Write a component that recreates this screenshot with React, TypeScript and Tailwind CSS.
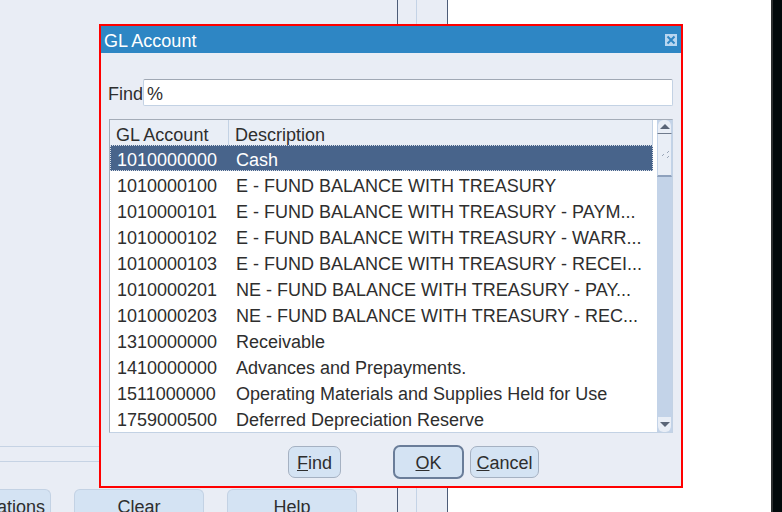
import React from 'react';

const ROWS: [string, string][] = [
  ['1010000000', 'Cash'],
  ['1010000100', 'E - FUND BALANCE WITH TREASURY'],
  ['1010000101', 'E - FUND BALANCE WITH TREASURY - PAYM...'],
  ['1010000102', 'E - FUND BALANCE WITH TREASURY - WARR...'],
  ['1010000103', 'E - FUND BALANCE WITH TREASURY - RECEI...'],
  ['1010000201', 'NE - FUND BALANCE WITH TREASURY - PAY...'],
  ['1010000203', 'NE - FUND BALANCE WITH TREASURY - REC...'],
  ['1310000000', 'Receivable'],
  ['1410000000', 'Advances and Prepayments.'],
  ['1511000000', 'Operating Materials and Supplies Held for Use'],
  ['1759000500', 'Deferred Depreciation Reserve'],
];

// Oracle Forms look: pale blue-grey panels, blue title bar
function TabButton({ children, className = '' }: { children: React.ReactNode; className?: string }) {
  return (
    <div
      className={`shrink-0 h-[30px] rounded-t-[6px] border border-b-0 border-[#c3d2e4] bg-[#d4e3f3] text-[18px] leading-none text-[#2e2e2e] flex justify-center pt-[8px] ${className}`}
    >
      {children}
    </div>
  );
}

function DlgButton({ children, def = false, w }: { children: React.ReactNode; def?: boolean; w: string }) {
  return (
    <div
      className={`${w} flex items-center justify-center rounded-[7px] bg-[#d4e3f3] text-[18px] leading-none text-[#2e2e2e] pt-[2px] ${
        def ? 'h-[34px] border-2 border-[#6a7d99]' : 'h-[32px] border border-[#a5b1c2]'
      }`}
    >
      {children}
    </div>
  );
}

function Scrollbar() {
  return (
    <div className="w-[15px] bg-[#c3d3e8] flex flex-col">
      <div className="h-[14px] bg-[#e9eef6] rounded-t-[6px] border-x border-[#c3d3e8] flex items-center justify-center border-b border-b-[#6f7a8c]">
        <div className="w-0 h-0 border-x-[5px] border-x-transparent border-b-[5px] border-b-[#5a6577]" />
      </div>
      <div className="h-[43px] bg-[#e9eef6] border-x border-[#c3d3e8] border-b-2 border-b-[#8ea1bd] relative">
        <svg width="13" height="13" viewBox="0 0 13 13" className="absolute left-[1px] top-[14px]">
          <rect x="9" y="3" width="1" height="1" fill="#9aa6b8" />
          <rect x="8" y="4" width="1" height="1" fill="#9aa6b8" />
          <rect x="4" y="6" width="1" height="1" fill="#9aa6b8" />
          <rect x="3" y="7" width="1" height="1" fill="#9aa6b8" />
          <rect x="9" y="8" width="1" height="1" fill="#9aa6b8" />
          <rect x="8" y="9" width="1" height="1" fill="#9aa6b8" />
        </svg>
      </div>
      <div className="flex-1" />
      <div className="h-[15px] bg-[#e9eef6] rounded-b-[6px] border-x border-[#c3d3e8] flex items-center justify-center">
        <div className="w-0 h-0 border-x-[5px] border-x-transparent border-t-[5px] border-t-[#5a6577]" />
      </div>
    </div>
  );
}

export default function App() {
  return (
    <div className="relative w-[782px] h-[512px] overflow-hidden flex font-['Liberation_Sans',Arial,sans-serif]">
      {/* background form */}
      <div className="w-[397px] bg-[#e9edf5] flex flex-col overflow-hidden">
        <div className="h-[446px] shrink-0" />
        <div className="h-[16px] shrink-0 border-y border-[#c6d3e4]" />
        <div className="h-[27px] shrink-0" />
        <div className="flex gap-[23px]">
          <TabButton className="w-[51px] border-l-0 rounded-tl-none justify-end pr-[5px] overflow-hidden whitespace-nowrap">
            Combinations
          </TabButton>
          <TabButton className="w-[130px]">Clear</TabButton>
          <TabButton className="w-[130px]">Help</TabButton>
        </div>
      </div>
      <div className="w-px bg-[#4d5c78]" />
      <div className="w-[18px] bg-[#e9edf5]" />
      <div className="w-px bg-[#c4d3e6]" />
      <div className="w-[30px] bg-[#e9edf5]" />
      <div className="w-px bg-[#4d5c78]" />
      <div className="flex-1 bg-white" />
      <div className="w-[2px] bg-[#2b2f30]" />
      <div className="w-[9px] bg-[#020a0c]" />

      {/* modal dialog */}
      <div className="absolute left-[99px] top-[24px] w-[584px] h-[464px] border-2 border-[#ff0000] bg-[#e9edf5] flex flex-col">
        <div className="h-[27px] shrink-0 bg-[#2e86c4] flex items-center justify-between pl-[3px] pr-[4px]">
          <span className="text-white text-[18px] leading-none pt-[3px]">GL Account</span>
          <div className="w-[12px] h-[12px] bg-[#b9d6f0] flex items-center justify-center">
            <svg width="10" height="10" viewBox="0 0 10 10">
              <path d="M1.5 1.5 L8.5 8.5 M8.5 1.5 L1.5 8.5" stroke="#2e86c4" strokeWidth="2" />
            </svg>
          </div>
        </div>

        <div className="h-[27px] shrink-0 flex items-center pl-[7px] pr-[8px] mt-[26px]">
          <span className="w-[35px] text-[18px] leading-none text-[#2e2e2e] pt-[2px]">Find</span>
          <div className="flex-1 h-[27px] bg-white border border-[#c3d2e4] border-t-[#a0a8b4] rounded-[2px] flex items-center pl-[3px] pt-[2px] text-[18px] leading-none text-[#2e2e2e]">
            %
          </div>
        </div>

        <div className="mx-[8px] mt-[13px] h-[314px] shrink-0 bg-white border border-[#c3d2e4] border-t-[#a4acb8] border-l-[#a4acb8] flex">
          <div className="flex-1 flex flex-col">
            <div className="h-[25px] shrink-0 bg-[#e9eef6] flex text-[18px] leading-none text-[#2e2e2e] mr-[4px] border-r border-[#c3d2e4]">
              <div className="w-[119px] pl-[6px] pt-[4px] border-r border-[#c3d2e4] flex items-center">GL Account</div>
              <div className="pl-[6px] pt-[4px] flex items-center">Description</div>
            </div>
            {ROWS.map(([acct, desc], i) => (
              <div
                key={acct}
                className={`h-[26px] shrink-0 flex items-center pt-[4px] text-[18px] leading-none whitespace-nowrap ${
                  i === 0
                    ? 'bg-[#48648b] text-white border border-dotted border-[#d8dee8] mr-[4px]'
                    : 'text-[#2e2e2e] border border-transparent'
                }`}
              >
                <div className="w-[119px] pl-[6px]">{acct}</div>
                <div className="pl-[6px]">{desc}</div>
              </div>
            ))}
          </div>
          <Scrollbar />
        </div>

        <div className="flex items-center pl-[187px] mt-[12px]">
          <DlgButton w="w-[53px]">
            <span><u>F</u>ind</span>
          </DlgButton>
          <div className="w-[52px]" />
          <DlgButton def w="w-[71px]">
            <span><u>O</u>K</span>
          </DlgButton>
          <div className="w-[6px]" />
          <DlgButton w="w-[69px]">
            <span><u>C</u>ancel</span>
          </DlgButton>
        </div>
      </div>
    </div>
  );
}
